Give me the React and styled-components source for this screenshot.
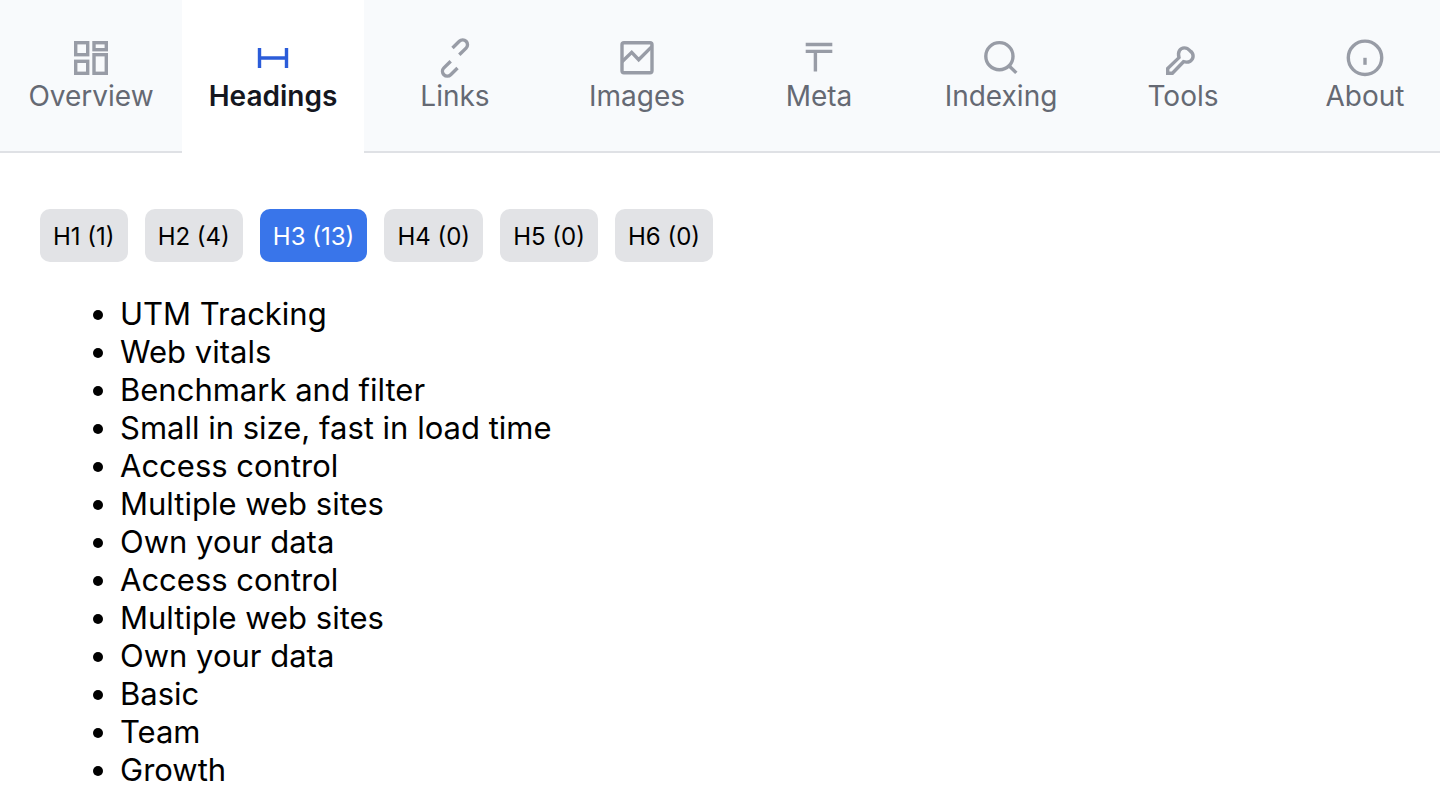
import React from 'react';
import styled, { createGlobalStyle } from 'styled-components';

const COLORS = {
  white: '#ffffff',
  black: '#000000',
  primary: '#3975ea',
  primaryDark: '#2b5cd9',
  gray: {
    50: '#f8fafc',
    200: '#e2e3e6',
    300: '#dfe1e5',
    400: '#989ca6',
    600: '#656973',
    900: '#15171f',
  },
};

const TABS = [
  {
    name: 'Overview',
    icon: (
      <>
        <rect x="8.7" y="8.7" width="12" height="12" />
        <rect x="27" y="8.7" width="12.3" height="7" />
        <rect x="8.7" y="27.3" width="12" height="12" />
        <rect x="27" y="20.7" width="12.3" height="18.6" />
      </>
    ),
  },
  {
    name: 'Headings',
    icon: <path d="M10.5 14v20M37.5 14v20M10.5 24h27" />,
  },
  {
    name: 'Links',
    icon: (
      <>
        <path d="M21.5 14l6.8-6.7a4.8 4.8 0 0 1 6.8 6.8l-6.8 6.7" />
        <path d="M26.5 34l-6.8 6.7a4.8 4.8 0 0 1-6.8-6.8l6.8-6.7" />
      </>
    ),
  },
  {
    name: 'Images',
    icon: (
      <>
        <rect x="9" y="8.7" width="30" height="30" rx="2" />
        <path d="M9 27.7l9.7-9.4 7 7.4L39 12.4" />
      </>
    ),
  },
  {
    name: 'Meta',
    icon: <path d="M10.7 10.5h26.6M10.7 17.4h26.6M20.4 17.4v20" />,
  },
  {
    name: 'Indexing',
    icon: (
      <>
        <circle cx="22.4" cy="22.2" r="13.6" />
        <path d="M32 31.7l7.3 7.2" />
      </>
    ),
  },
  {
    name: 'Tools',
    icon: (
      <path d="M8.7 39.3v-4.8L20 23.6c-1.6-5.6 1-9.7 5.3-9.7 3 0 4.2 1.2 5.6 2.8 2 1.2 3.2 2.8 3.2 5.4 0 4.6-4.4 7-9.6 5.6L13.4 39.3z" />
    ),
  },
  {
    name: 'About',
    icon: (
      <>
        <circle cx="24" cy="23.8" r="16.7" />
        <path d="M24 23.8v7" />
      </>
    ),
  },
];

const LEVELS = [
  { level: 'H1', count: 1 },
  { level: 'H2', count: 4 },
  { level: 'H3', count: 13 },
  { level: 'H4', count: 0 },
  { level: 'H5', count: 0 },
  { level: 'H6', count: 0 },
];

const HEADINGS = [
  'UTM Tracking',
  'Web vitals',
  'Benchmark and filter',
  'Small in size, fast in load time',
  'Access control',
  'Multiple web sites',
  'Own your data',
  'Access control',
  'Multiple web sites',
  'Own your data',
  'Basic',
  'Team',
  'Growth',
];

const App = () => {
  return (
    <>
      <GlobalStyle />
      <Header>
        <Nav>
          {TABS.map(({ name, icon }) => (
            <Tab
              key={name}
              href={`#${name.toLowerCase()}`}
              $active={name === 'Headings'}
              aria-current={name === 'Headings' ? 'page' : undefined}
            >
              <Icon viewBox="0 0 48 48" aria-hidden="true">
                {icon}
              </Icon>
              <TabName>{name}</TabName>
            </Tab>
          ))}
        </Nav>
      </Header>
      <Main>
        <Filters>
          {LEVELS.map(({ level, count }) => (
            <Filter
              key={level}
              type="button"
              $active={level === 'H3'}
              aria-pressed={level === 'H3'}
            >
              {`${level} (${count})`}
            </Filter>
          ))}
        </Filters>
        <List>
          {HEADINGS.map((heading, index) => (
            <li key={index}>{heading}</li>
          ))}
        </List>
      </Main>
    </>
  );
};

const GlobalStyle = createGlobalStyle`
  *, *::before, *::after {
    box-sizing: border-box;
  }

  body {
    margin: 0;
    background: ${COLORS.white};
    color: ${COLORS.black};
    font-family: Inter, 'Liberation Sans', sans-serif;
  }
`;

const Header = styled.header`
  overflow: hidden;
`;

// The tab strip runs slightly past the right edge of the panel.
const Nav = styled.nav`
  display: grid;
  grid-template-columns: repeat(8, minmax(0, 1fr));
  margin-right: -16px;
`;

const Tab = styled.a`
  display: flex;
  flex-direction: column;
  align-items: center;
  padding: 34px 0 37px;
  border-bottom: 2px solid ${props => props.$active ? COLORS.white : COLORS.gray[300]};
  background: ${props => props.$active ? COLORS.white : COLORS.gray[50]};
  color: ${props => props.$active ? COLORS.gray[900] : COLORS.gray[600]};
  font-weight: ${props => props.$active ? 600 : 400};
  text-decoration: none;

  svg {
    stroke: ${props => props.$active ? COLORS.primaryDark : COLORS.gray[400]};
  }
`;

const Icon = styled.svg`
  width: 48px;
  height: 48px;
  fill: none;
  stroke-width: 3.4;
`;

const TabName = styled.span`
  margin-top: -3px;
  font-size: 28px;
  line-height: 35px;
`;

const Main = styled.main`
  padding: 56px 40px 0;
`;

const Filters = styled.div`
  display: flex;
  flex-wrap: wrap;
  gap: 17px;
`;

const Filter = styled.button`
  height: 53px;
  padding: 2px 13px 0;
  border: none;
  border-radius: 10px;
  background: ${props => props.$active ? COLORS.primary : COLORS.gray[200]};
  color: ${props => props.$active ? COLORS.white : COLORS.black};
  font: inherit;
  font-size: 24px;
`;

const List = styled.ul`
  margin: 33px 0 0;
  padding: 0 0 0 80px;
  font-size: 31px;
  line-height: 38px;
`;

export default App;
